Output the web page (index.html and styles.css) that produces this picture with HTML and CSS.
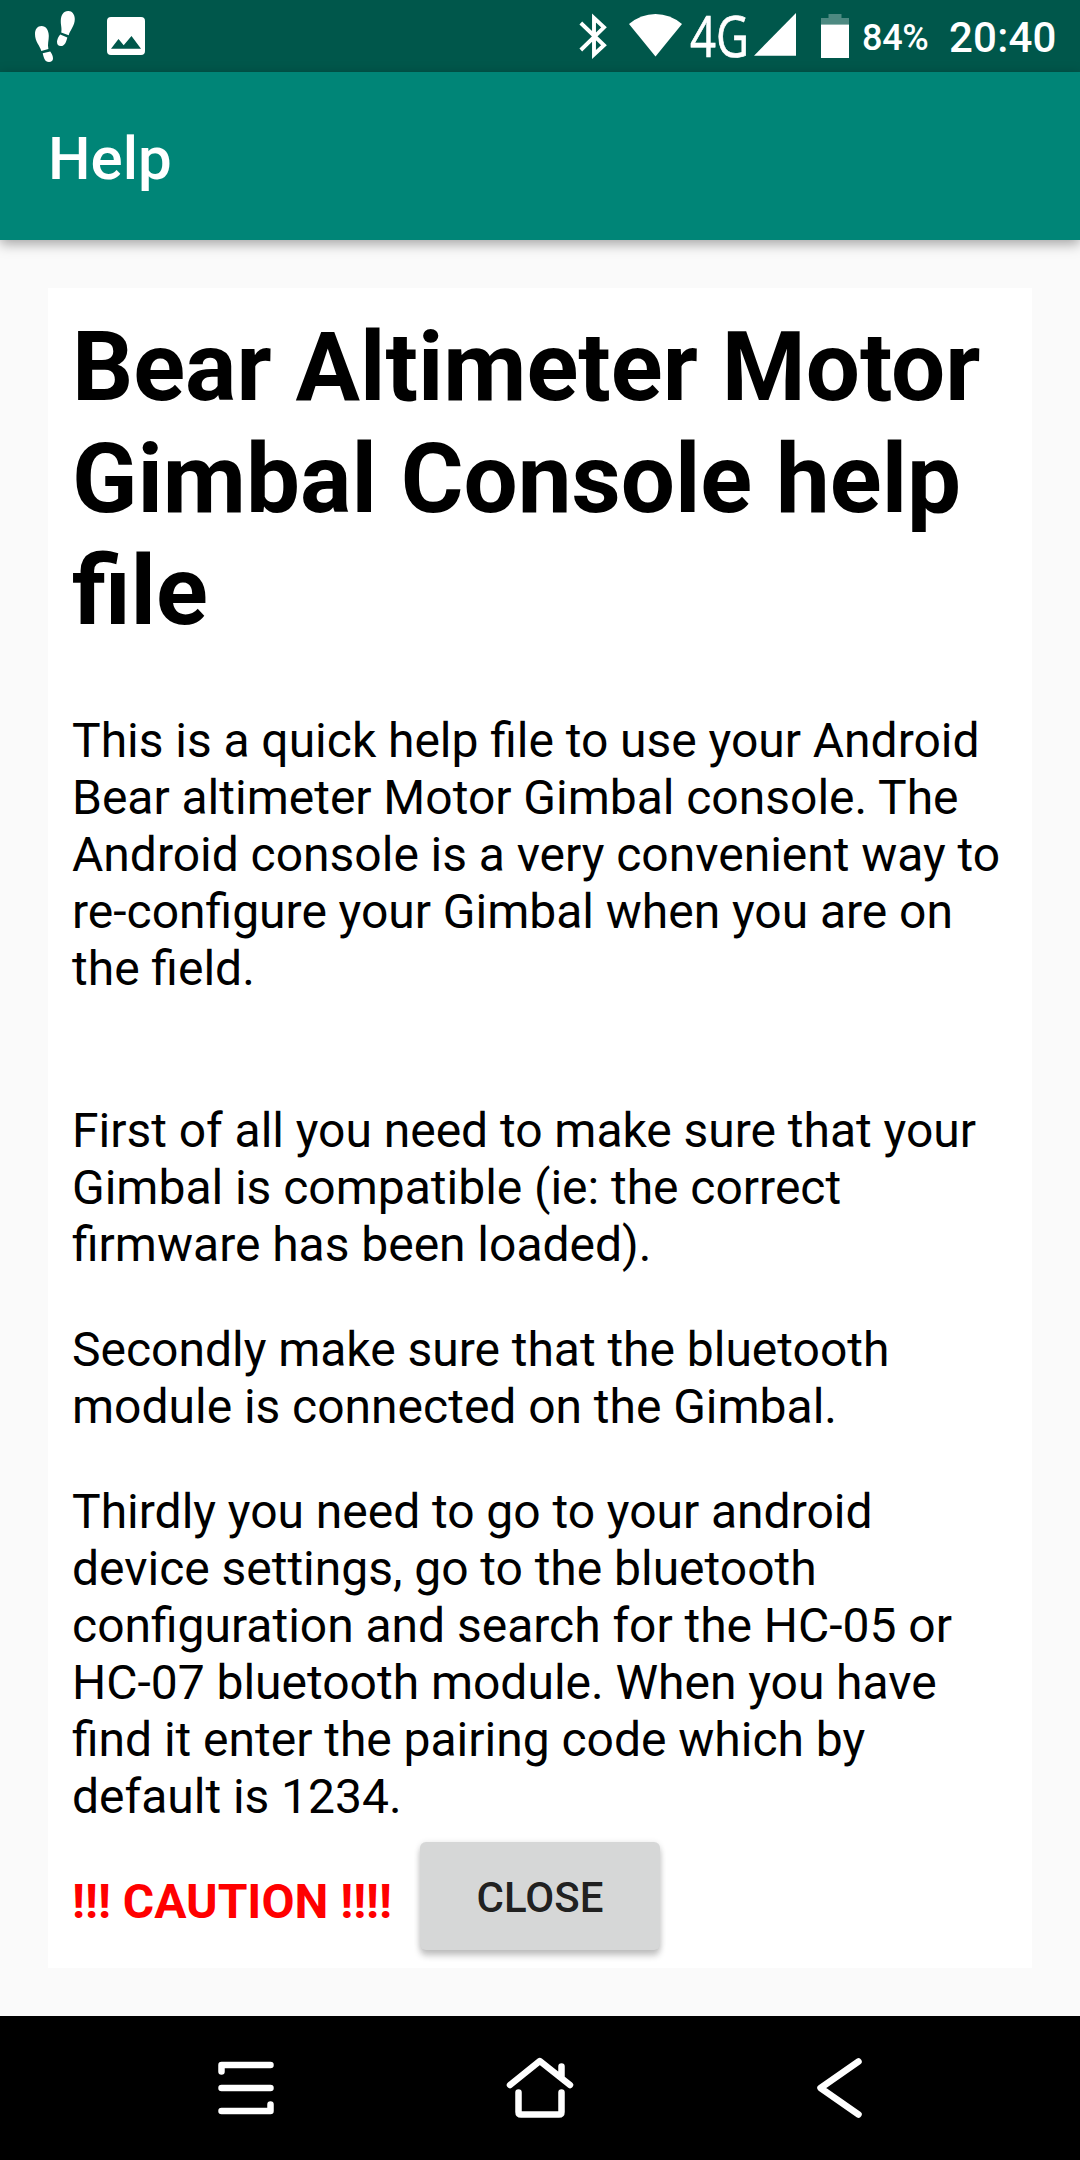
FILE: index.html
```html
<!DOCTYPE html>
<html lang="en">
<head>
<meta charset="utf-8">
<title>Help</title>
<link rel="stylesheet" href="styles.css">
</head>
<body>
<div class="screen">
  <div class="status-bar">
    <svg class="steps-icon" width="60" height="72" viewBox="25 0 60 72" fill="#fff">
      <path d="M41.5 26C46 26 48.7 30 48.8 36C48.9 40 47.3 44 48.4 49L41.3 51C40 45.500 35 42 35 34C35 29 37.500 26 41.500 26Z"/>
      <path d="M42.700 53.300L50.200 51.400C52 54 53 56 53 58.500C53 60.800 51.500 62 49 62C44.700 62 43.800 58 42.700 53.300Z"/>
      <path d="M68 11C71.500 10.500 74.800 14 74.800 19C74.800 26 70 30 68.700 35.200L61.200 32.500C62.200 28 60.500 25 60.800 20C61.100 15 63.500 11 68 11Z"/>
      <path d="M60.300 34.500L67.300 37.400C66.500 41 65 46 60.800 46C58 46 56.800 44 57 41.500C57.200 39 58.500 36.500 60.300 34.500Z"/>
    </svg>
    <svg class="picture-icon" width="38" height="72" viewBox="107 0 38 72">
      <path fill="#fff" fill-rule="evenodd" d="M111 17H141Q145 17 145 21V51Q145 55 141 55H111Q107 55 107 51V21Q107 17 111 17ZM111 48.800H141L131.500 36L123.700 45.300L118.500 39Z"/>
    </svg>
    <svg class="signal-icons" width="280" height="72" viewBox="575 0 280 72" fill="#fff">
      <path fill="none" stroke="#fff" stroke-width="3.900" d="M580.800 23L604 45.300L594 54.500V18L604 27.300L580.800 50"/>
      <path d="M629 24Q641 14 655.500 14Q670 14 682 24L655.500 56.500Z"/>
      <text class="network" x="690" y="57" textLength="59" lengthAdjust="spacingAndGlyphs">4G</text>
      <path d="M754 55.700L796 13V55.700Z"/>
      <path fill-opacity=".3" d="M828.500 14H841.500V18H849V24.500H821V18H828.500Z"/>
      <path d="M821 24.500H849V58H821Z"/>
    </svg>
    <span class="battery">84%</span>
    <span class="clock">20:40</span>
  </div>
  <header class="app-bar">Help</header>
  <main class="content">
    <article class="help">
      <h1>Bear Altimeter Motor Gimbal Console help file</h1>
      <p>This is a quick help file to use your Android Bear altimeter Motor Gimbal console. The Android console is a very convenient way to re-configure your Gimbal when you are on the field.</p>
      <br>
      <p>First of all you need to make sure that your Gimbal is compatible (ie: the correct firmware has been loaded).</p>
      <p>Secondly make sure that the bluetooth module is connected on the Gimbal.</p>
      <p>Thirdly you need to go to your android device settings, go to the bluetooth configuration and search for the HC-05 or HC-07 bluetooth module. When you have find it enter the pairing code which by default is 1234.</p>
      <p class="caution">!!! CAUTION !!!!</p>
    </article>
    <button class="close" type="button">CLOSE</button>
  </main>
  <nav class="nav-bar">
    <svg width="72" height="72" viewBox="210 2052 72 72"><path d="M221.500 2071.500V2065H270.500M221.500 2088H270.500M221.500 2111H270.500V2104.500"/></svg>
    <svg width="72" height="72" viewBox="504 2052 72 72"><path d="M510 2085L539.800 2061L570 2085M561.500 2077V2066.500M518.500 2092.500V2112Q518.500 2114.500 521 2114.500H559Q561.500 2114.500 561.500 2112V2092.500"/></svg>
    <svg width="72" height="72" viewBox="803 2052 72 72"><path d="M858.500 2061.500L820.500 2088L858.500 2114.500"/></svg>
  </nav>
</div>
</body>
</html>
```
FILE: styles.css
```css
* { box-sizing: border-box; }

body {
  margin: 0;
  background: #fafafa;
  font-family: Roboto, sans-serif;
  color: #000;
}

.screen {
  display: flex;
  flex-direction: column;
  width: 1080px;
  height: 2160px;
  overflow: hidden;
}

svg { display: block; flex: none; overflow: visible; }

.status-bar {
  display: flex;
  height: 72px;
  background: #00574b;
  color: #fff;
  font-weight: 500;
}

.steps-icon { margin-left: 25px; }
.picture-icon { margin-left: 22px; }
.signal-icons { margin-left: auto; }

.network {
  font: 400 56px "Open Sans", sans-serif;
  stroke: #fff;
  stroke-width: .7px;
}

.battery {
  width: 86px;
  padding-left: 7px;
  font-size: 36px;
  letter-spacing: -.3px;
  line-height: 76px;
}

.clock {
  width: 139px;
  padding-left: 8px;
  font-size: 42px;
  letter-spacing: .2px;
  line-height: 76px;
}

.app-bar {
  height: 168px;
  padding-left: 48px;
  background: #008577;
  box-shadow: 0 4px 12px rgba(0, 0, 0, .35);
  color: #fff;
  font-size: 60px;
  font-weight: 500;
  line-height: 173px;
}

.content {
  position: relative;
  flex: 1;
  padding: 48px;
}

.help {
  height: 1680px;
  padding: 23px 24px 24px;
  background: #fff;
  font-size: 48px;
  line-height: 57px;
}

.help h1 {
  margin: 0 0 65px;
  font-size: 96px;
  font-weight: 700;
  line-height: 112px;
}

.help p {
  margin: 0 0 48px;
  word-spacing: -.15px;
}

.help .caution {
  color: #f00;
  font-weight: 700;
}

/* The button floats over the bottom of the help text. */
.close {
  position: absolute;
  bottom: 66px;
  left: 420px;
  width: 240px;
  height: 108px;
  padding: 3px 0 0;
  border: 0;
  border-radius: 6px;
  background: #d6d7d7;
  box-shadow: 0 6px 6px rgba(0, 0, 0, .2), 0 1px 6px rgba(0, 0, 0, .12);
  color: rgba(0, 0, 0, .87);
  font: 500 42px/105px Roboto, sans-serif;
}

.nav-bar {
  display: grid;
  grid-template-columns: 72px 72px 72px;
  column-gap: 222px;
  height: 144px;
  padding: 36px 0 0 210px;
  background: #000;
}

.nav-bar path {
  fill: none;
  stroke: #fff;
  stroke-width: 6.5;
  stroke-linecap: round;
  stroke-linejoin: round;
}

.nav-bar svg:last-child { margin-left: 5px; }
```
